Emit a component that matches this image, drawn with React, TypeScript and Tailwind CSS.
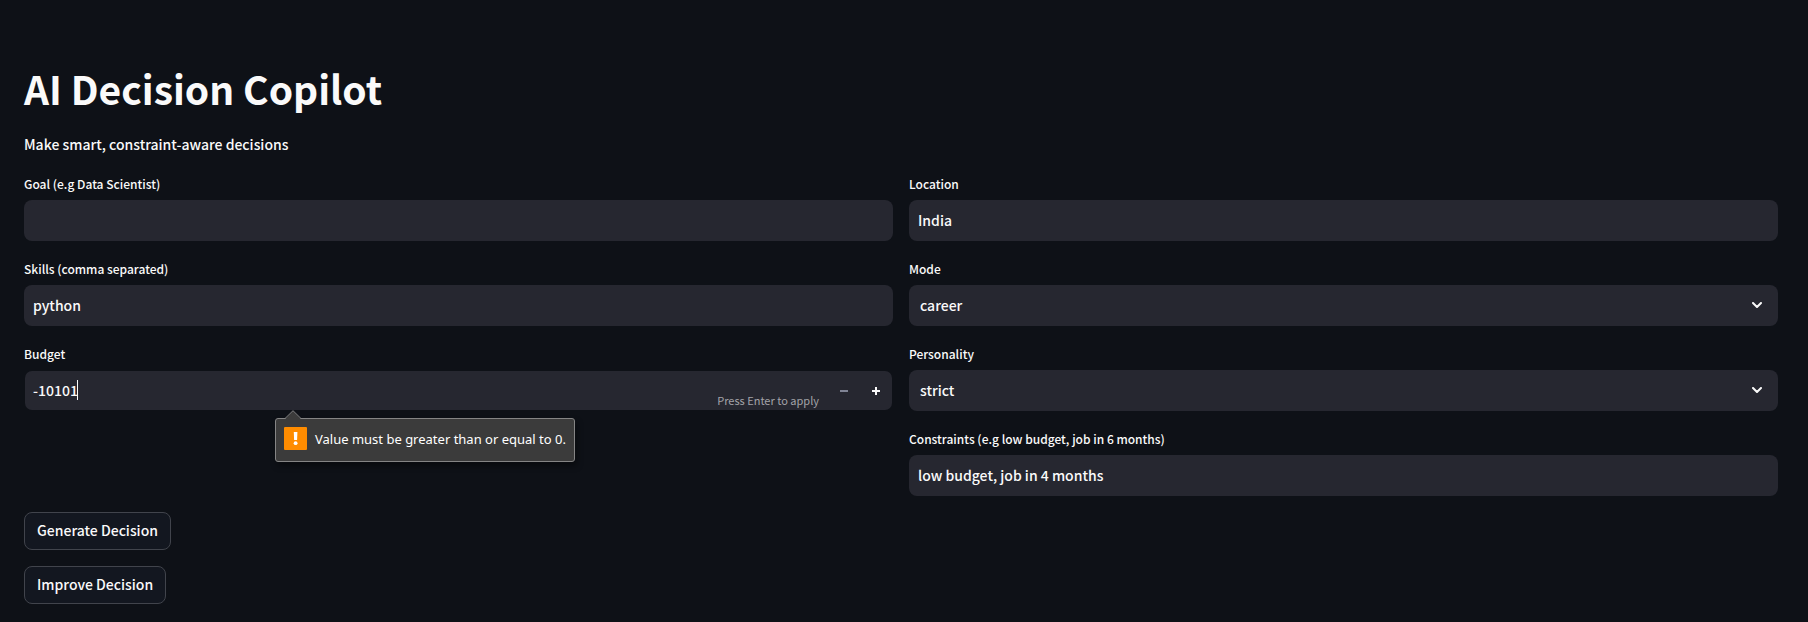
import { useState, type ReactNode } from "react";

const fieldClass =
  "h-[41px] w-full rounded-lg bg-[#262730] pb-px text-sm font-medium text-[#fafafa] outline-none";

function Field({ id, label, children }: { id: string; label: string; children: ReactNode }) {
  return (
    <div className="flex flex-col">
      <label htmlFor={id} className="h-7 text-xs leading-6 font-medium">
        {label}
      </label>
      {children}
    </div>
  );
}

function TextField({ id, label, initial }: { id: string; label: string; initial: string }) {
  const [value, setValue] = useState(initial);
  return (
    <Field id={id} label={label}>
      <input
        id={id}
        type="text"
        value={value}
        onChange={(e) => setValue(e.target.value)}
        className={`${fieldClass} px-[9px]`}
      />
    </Field>
  );
}

function SelectField({ id, label, options }: { id: string; label: string; options: string[] }) {
  return (
    <Field id={id} label={label}>
      <div className="relative">
        <select id={id} className={`${fieldClass} appearance-none pr-10 pl-[11px]`}>
          {options.map((option) => (
            <option key={option}>{option}</option>
          ))}
        </select>
        <svg
          viewBox="0 0 10 6"
          className="pointer-events-none absolute top-[17px] right-4 h-[6px] w-[10px]"
          fill="none"
          stroke="#fafafa"
          strokeWidth="2"
          strokeLinecap="round"
          strokeLinejoin="round"
          aria-hidden="true"
        >
          <path d="M1 1l4 4 4-4" />
        </svg>
      </div>
    </Field>
  );
}

function ValidationBubble() {
  return (
    <div
      role="alert"
      className="absolute top-[47px] left-[250px] z-10 flex h-11 items-center gap-2 rounded-[3px] border border-[#858585] bg-[#3b3b3b] px-2 font-['Noto_Sans',sans-serif] text-[13px] whitespace-nowrap text-white shadow-[2px_4px_6px_rgba(0,0,0,0.4)]"
    >
      <svg
        viewBox="0 0 16 9"
        className="absolute -top-[9px] left-[9px] h-[9px] w-4"
        aria-hidden="true"
      >
        <path d="M0 9L8 1l8 8z" fill="#3b3b3b" />
        <path d="M0 8.5L8 .7l8 7.8" fill="none" stroke="#858585" />
      </svg>
      <svg viewBox="0 0 23 23" className="mb-1 size-[23px]" aria-hidden="true">
        <rect width="23" height="23" rx="1" fill="#ff8c00" />
        <path d="M9.8 5h3.6l-.3 8h-3z" fill="#fff" />
        <circle cx="11.6" cy="16.2" r="1.9" fill="#fff" />
      </svg>
      <span>Value must be greater than or equal to 0.</span>
    </div>
  );
}

function BudgetField() {
  const [value, setValue] = useState(-10101);
  const invalid = value < 0;
  return (
    <Field id="budget" label="Budget">
      <div className="relative flex h-[41px] rounded-lg border border-transparent bg-[#262730] bg-clip-padding">
        <input
          id="budget"
          type="number"
          min={0}
          value={value}
          onChange={(e) => setValue(Number(e.target.value))}
          className="min-w-0 grow appearance-none bg-transparent px-2 pb-px text-sm font-medium text-[#fafafa] caret-transparent outline-none [-moz-appearance:textfield] [&::-webkit-inner-spin-button]:appearance-none"
        />
        <span className="pointer-events-none absolute top-[9px] left-[52px] h-5 w-px bg-[#fafafa]" />
        <span className="pointer-events-none absolute right-[73px] bottom-0.5 text-[11px] leading-4 text-[#a3a3a8]">
          Press Enter to apply
        </span>
        <button
          type="button"
          aria-label="Decrease budget"
          disabled={invalid}
          onClick={() => setValue(value - 1)}
          className="flex w-8 items-center justify-center text-[#808495]"
        >
          <svg viewBox="0 0 8 8" className="size-2" fill="currentColor" aria-hidden="true">
            <path d="M0 3h8v2H0z" />
          </svg>
        </button>
        <button
          type="button"
          aria-label="Increase budget"
          onClick={() => setValue(value + 1)}
          className="flex w-8 items-center justify-center text-[#fafafa]"
        >
          <svg viewBox="0 0 8 8" className="size-2" fill="currentColor" aria-hidden="true">
            <path d="M3 0h2v3h3v2H5v3H3V5H0V3h3z" />
          </svg>
        </button>
        {invalid && <ValidationBubble />}
      </div>
    </Field>
  );
}

function ActionButton({ children }: { children: ReactNode }) {
  return (
    <button
      type="button"
      className="h-[38px] rounded-lg border border-[#41444c] bg-[#131720] px-3 pb-0.5 text-sm font-medium"
    >
      {children}
    </button>
  );
}

export default function App() {
  return (
    <main className="min-h-screen bg-[#0e1117] pt-16 pr-[30px] pb-4 pl-6 font-['Noto_Sans_CJK_SC','Noto_Sans',sans-serif] text-[#fafafa]">
      <h1 className="text-[39px] leading-12 font-bold">AI Decision Copilot</h1>
      <p className="mt-5 text-sm leading-6 font-medium">Make smart, constraint-aware decisions</p>
      <form className="mt-4" onSubmit={(e) => e.preventDefault()}>
        <div className="grid grid-cols-2 gap-4">
          <div className="flex flex-col gap-4">
            <TextField id="goal" label="Goal (e.g Data Scientist)" initial="" />
            <TextField id="skills" label="Skills (comma separated)" initial="python" />
            <BudgetField />
          </div>
          <div className="flex flex-col gap-4">
            <TextField id="location" label="Location" initial="India" />
            <SelectField id="mode" label="Mode" options={["career", "startup", "learning"]} />
            <SelectField id="personality" label="Personality" options={["strict", "balanced", "friendly"]} />
            <TextField
              id="constraints"
              label="Constraints (e.g low budget, job in 6 months)"
              initial="low budget, job in 4 months"
            />
          </div>
        </div>
        <div className="mt-4 flex flex-col items-start gap-4">
          <ActionButton>Generate Decision</ActionButton>
          <ActionButton>Improve Decision</ActionButton>
        </div>
      </form>
    </main>
  );
}
